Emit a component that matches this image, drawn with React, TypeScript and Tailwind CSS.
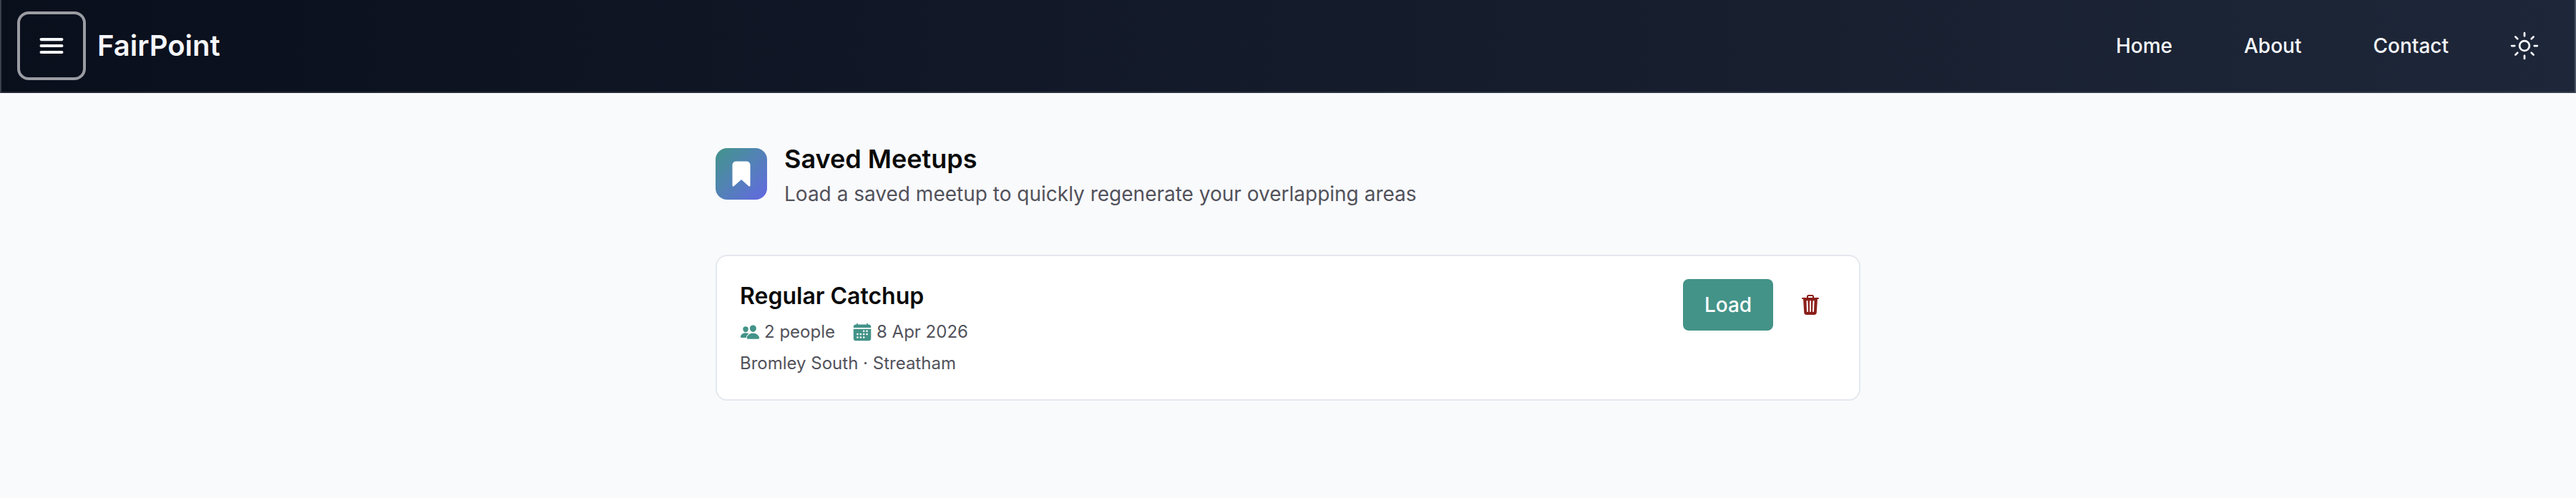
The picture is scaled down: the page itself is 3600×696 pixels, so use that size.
import { IoBookmark, IoCalendar, IoMenu, IoPeople, IoSunnyOutline, IoTrash } from 'react-icons/io5';

const navLinks = ['Home', 'About', 'Contact'];

export default function App() {
  return (
    <div className="min-h-[696px] bg-[#f9fafc] font-['Inter',sans-serif]">
      <header className="flex h-[130px] items-center justify-between border-x-2 border-b-2 border-x-white/20 border-b-white/10 bg-gradient-to-r from-[#0a0f1c] to-[#1e2739] bg-origin-border pl-[22px] pr-[48px]">
        <div className="flex items-center gap-4">
          <button className="flex size-24 items-center justify-center rounded-2xl border-4 border-[#9b9ca3] text-[#f5f7fb]">
            <IoMenu className="size-11" />
          </button>
          <span className="text-[40px] font-semibold text-[#f5f7fb]">FairPoint</span>
        </div>
        <nav className="flex items-center gap-[100px]">
          {navLinks.map((link) => (
            <a key={link} className="text-[28px] font-medium text-[#f5f7fb]">
              {link}
            </a>
          ))}
          <IoSunnyOutline className="ml-[-16px] size-11 text-[#f5f7fb]" />
        </nav>
      </header>

      <main className="mx-auto w-[1600px] pt-[70px]">
        <div className="flex items-start gap-6">
          <div className="mt-[7px] flex size-[72px] items-center justify-center rounded-2xl bg-gradient-to-br from-[#42948a] to-[#6366e1]">
            <IoBookmark className="size-10 text-white" />
          </div>
          <div>
            <h1 className="text-[36px] font-semibold leading-[44px] text-[#0a0a0a]">Saved Meetups</h1>
            <p className="mt-1.5 text-[28px] leading-[42px] text-[#52525b]">
              Load a saved meetup to quickly regenerate your overlapping areas
            </p>
          </div>
        </div>

        <div className="mt-16 flex items-start justify-between rounded-2xl border-2 border-[#e4e8ef] bg-white p-8">
          <div>
            <h2 className="text-[32px] font-semibold leading-[48px] text-[#0a0a0a]">Regular Catchup</h2>
            <div className="mt-2 flex items-center gap-6 text-[24px] leading-9 text-[#52525b]">
              <span className="flex items-center gap-1.5">
                <IoPeople className="size-7 text-[#439388]" />2 people
              </span>
              <span className="flex items-center gap-1.5">
                <IoCalendar className="size-7 text-[#439388]" />8 Apr 2026
              </span>
            </div>
            <p className="mt-2 text-[24px] leading-9 text-[#52525b]">Bromley South · Streatham</p>
          </div>
          <div className="flex items-center gap-4">
            <button className="h-[72px] w-[126px] rounded-lg bg-[#439388] text-[28px] font-medium text-white">Load</button>
            <button className="flex size-[72px] items-center justify-center text-[#8b1f1a]">
              <IoTrash className="size-8" />
            </button>
          </div>
        </div>
      </main>
    </div>
  );
}
